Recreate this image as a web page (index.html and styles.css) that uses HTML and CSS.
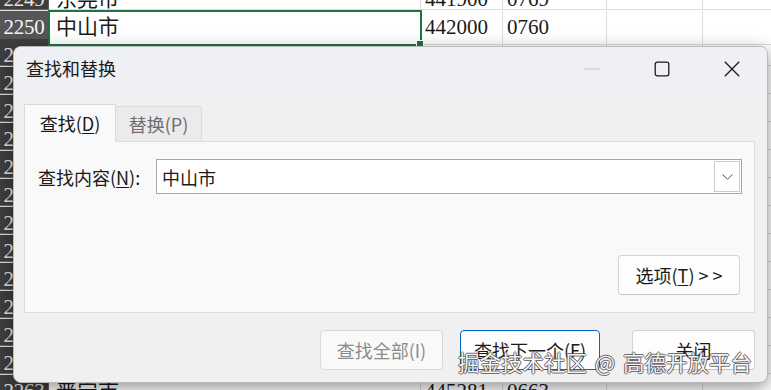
FILE: index.html
```html
<!DOCTYPE html>
<html lang="zh-CN">
<head>
<meta charset="utf-8">
<title>查找和替换</title>
<link rel="stylesheet" href="styles.css">
</head>
<body>
<div class="sheet">
  <div class="row"><div class="rh">2249</div><div class="c">东莞市</div><div class="c">441900</div><div class="c">0769</div><div class="c"></div><div class="c"></div><div class="c"></div></div>
  <div class="row"><div class="rh rh-sel">2250</div><div class="c sel">中山市</div><div class="c">442000</div><div class="c">0760</div><div class="c"></div><div class="c"></div><div class="c"></div></div>
  <div class="row"><div class="rh">2251</div><div class="c">东沙群岛</div><div class="c">442101</div><div class="c"></div><div class="c"></div><div class="c"></div><div class="c"></div></div>
  <div class="row"><div class="rh">2252</div><div class="c">潮州市</div><div class="c">445100</div><div class="c">0768</div><div class="c"></div><div class="c"></div><div class="c"></div></div>
  <div class="row"><div class="rh">2253</div><div class="c">湘桥区</div><div class="c">445102</div><div class="c">0768</div><div class="c"></div><div class="c"></div><div class="c"></div></div>
  <div class="row"><div class="rh">2254</div><div class="c">潮安区</div><div class="c">445103</div><div class="c">0768</div><div class="c"></div><div class="c"></div><div class="c"></div></div>
  <div class="row"><div class="rh">2255</div><div class="c">饶平县</div><div class="c">445122</div><div class="c">0768</div><div class="c"></div><div class="c"></div><div class="c"></div></div>
  <div class="row"><div class="rh">2256</div><div class="c">揭阳市</div><div class="c">445200</div><div class="c">0663</div><div class="c"></div><div class="c"></div><div class="c"></div></div>
  <div class="row"><div class="rh">2257</div><div class="c">榕城区</div><div class="c">445202</div><div class="c">0663</div><div class="c"></div><div class="c"></div><div class="c"></div></div>
  <div class="row"><div class="rh">2258</div><div class="c">揭东区</div><div class="c">445203</div><div class="c">0663</div><div class="c"></div><div class="c"></div><div class="c"></div></div>
  <div class="row"><div class="rh">2259</div><div class="c">揭西县</div><div class="c">445222</div><div class="c">0663</div><div class="c"></div><div class="c"></div><div class="c"></div></div>
  <div class="row"><div class="rh">2260</div><div class="c">惠来县</div><div class="c">445224</div><div class="c">0663</div><div class="c"></div><div class="c"></div><div class="c"></div></div>
  <div class="row"><div class="rh">2261</div><div class="c">揭阳市区</div><div class="c">445201</div><div class="c">0663</div><div class="c"></div><div class="c"></div><div class="c"></div></div>
  <div class="row"><div class="rh">2262</div><div class="c">空港区</div><div class="c">445204</div><div class="c">0663</div><div class="c"></div><div class="c"></div><div class="c"></div></div>
  <div class="row"><div class="rh">2263</div><div class="c">普宁市</div><div class="c">445281</div><div class="c">0663</div><div class="c"></div><div class="c"></div><div class="c"></div></div>
</div>

<div class="dialog">
  <div class="titlebar">
    <div class="title">查找和替换</div>
    <div class="caption">
      <div class="cap-btn">
        <svg width="16" height="16" viewBox="0 0 16 16"><path d="M0.5 8h15" stroke="#c4c4c4" stroke-width="1.1" fill="none"/></svg>
      </div>
      <div class="cap-btn">
        <svg width="16" height="16" viewBox="0 0 16 16"><rect x="1.2" y="1.2" width="13.6" height="13.6" rx="2" stroke="#1b1b1b" stroke-width="1.3" fill="none"/></svg>
      </div>
      <div class="cap-btn">
        <svg width="16" height="16" viewBox="0 0 16 16"><path d="M0.8 0.8L15.2 15.2M15.2 0.8L0.8 15.2" stroke="#1b1b1b" stroke-width="1.3" fill="none"/></svg>
      </div>
    </div>
  </div>
  <div class="body">
    <div class="tabs">
      <div class="tab tab-active">查找(<u>D</u>)</div>
      <div class="tab">替换(P)</div>
    </div>
    <div class="panel">
      <div class="find-row">
        <label class="label">查找内容(<u>N</u>):</label>
        <div class="combo">
          <span class="combo-text">中山市</span>
          <span class="combo-drop">
            <svg width="11" height="6" viewBox="0 0 11 6"><path d="M0.5 0.5L5.5 5.2L10.5 0.5" stroke="#555" stroke-width="1" fill="none"/></svg>
          </span>
        </div>
      </div>
      <div class="opt-row">
        <div class="btn btn-opt">选项(<u>T</u>) &gt; &gt;</div>
      </div>
    </div>
    <div class="actions">
      <div class="btn btn-disabled">查找全部(I)</div>
      <div class="btn btn-default">查找下一个(F)</div>
      <div class="btn btn-close">关闭</div>
    </div>
  </div>
</div>

<div class="watermark">掘金技术社区 @ 高德开放平台</div>
</body>
</html>
```
FILE: styles.css
```css
html, body {
  margin: 0;
  padding: 0;
}
body {
  width: 771px;
  height: 390px;
  overflow: hidden;
  background: #ffffff;
  position: relative;
}

/* spreadsheet */
.sheet {
  margin-top: -17px;
  font-family: "Liberation Serif", "Noto Sans CJK SC", serif;
  font-size: 21px;
  color: #1a1a1a;
}
.row {
  display: grid;
  grid-template-columns: 49px 372px 82px 104px 96px 100px;
  height: 28px;
}
.rh {
  background: #3e3e3e;
  color: #e4e4e4;
  text-align: center;
  line-height: 32px;
  border-bottom: 1px solid #6a6a6a;
  border-right: 1px solid #5c5c5c;
  box-sizing: border-box;
  letter-spacing: -0.3px;
  overflow: hidden;
}
.rh-sel {
  background: #565656;
  color: #f5f5f5;
}
.c {
  box-sizing: border-box;
  border-right: 1px solid #dcdcdc;
  border-bottom: 1px solid #dcdcdc;
  padding-left: 4px;
  line-height: 33px;
  white-space: nowrap;
  overflow: hidden;
}
.c:nth-child(2) {
  padding-left: 7px;
}
.sel {
  position: relative;
  overflow: visible;
  outline: 2px solid #217346;
  outline-offset: -1px;
}
.sel::after {
  content: "";
  position: absolute;
  right: -4px;
  bottom: -4px;
  width: 6px;
  height: 6px;
  background: #217346;
  border: 1px solid #fff;
}

/* dialog */
.dialog {
  position: absolute;
  left: 13px;
  top: 46px;
  width: 755px;
  height: 337px;
  box-sizing: border-box;
  background: #f0f0f0;
  border: 1px solid #b9b9b9;
  border-radius: 8px;
  box-shadow: 0 5px 18px rgba(0, 0, 0, 0.42);
  display: flex;
  flex-direction: column;
  font-family: "Noto Sans CJK SC", sans-serif;
  font-size: 18px;
  color: #1a1a1a;
  overflow: hidden;
}
.titlebar {
  height: 43px;
  display: flex;
  align-items: center;
  background: #eff0f4;
}
.title {
  padding-left: 12px;
  flex: 1;
  line-height: 43px;
}
.caption {
  display: flex;
  height: 43px;
}
.cap-btn {
  width: 70px;
  height: 43px;
  display: flex;
  align-items: center;
  justify-content: center;
}
.body {
  flex: 1;
  display: flex;
  flex-direction: column;
  padding: 14px 12px 12px 10px;
}
.tabs {
  display: flex;
  align-items: flex-end;
  height: 37px;
}
.tab {
  box-sizing: border-box;
  width: 86px;
  height: 35px;
  display: flex;
  align-items: center;
  justify-content: center;
  background: #ebebeb;
  color: #6e6e6e;
  border: 1px solid #dcdcdc;
  border-bottom: none;
  border-left: none;
}
.tab-active {
  width: 92px;
  height: 38px;
  margin-bottom: -1px;
  background: #f9f9f9;
  color: #1a1a1a;
  border: 1px solid #dadada;
  border-bottom: none;
  position: relative;
  z-index: 1;
  padding-bottom: 1px;
}
.panel {
  height: 172px;
  box-sizing: border-box;
  background: #f9f9f9;
  border: 1px solid #dcdcdc;
  padding: 17px 12px 17px 13px;
  display: flex;
  flex-direction: column;
}
.find-row {
  display: flex;
  align-items: center;
  height: 35px;
}
.label {
  width: 118px;
  flex-shrink: 0;
}
.combo {
  flex: 1;
  height: 35px;
  box-sizing: border-box;
  background: #ffffff;
  border: 1px solid #a8a8a8;
  display: flex;
  align-items: center;
}
.combo-text {
  flex: 1;
  padding-left: 5px;
}
.combo-drop {
  width: 26px;
  height: 31px;
  box-sizing: border-box;
  margin-right: 1px;
  border: 1px solid #cdcdcd;
  display: flex;
  align-items: center;
  justify-content: center;
}
.opt-row {
  margin-top: auto;
  display: flex;
  justify-content: flex-end;
  padding-right: 2px;
}
.btn {
  box-sizing: border-box;
  height: 40px;
  width: 123px;
  display: flex;
  align-items: center;
  justify-content: center;
  background: #fdfdfd;
  border: 1px solid #d3d3d3;
  border-bottom-color: #c4c4c4;
  border-radius: 4px;
  color: #1a1a1a;
  white-space: pre;
}
.btn-opt {
  width: 122px;
}
.actions {
  margin-top: 17px;
  display: flex;
  justify-content: flex-end;
}
.btn-disabled {
  color: #8c8c8c;
  background: #f9f9f9;
  border-color: #d9d9d9;
}
.btn-default {
  width: 140px;
  margin-left: 17px;
  border: 1px solid #0067c0;
  box-shadow: inset 0 0 0 1px #ffffff;
}
.btn-close {
  margin-left: 32px;
}
u {
  text-decoration-thickness: 1px;
  text-underline-offset: 2px;
}

/* watermark overlay */
.watermark {
  position: absolute;
  left: 458px;
  top: 350px;
  font-family: "Noto Sans CJK SC", sans-serif;
  font-size: 21.5px;
  line-height: 24px;
  word-spacing: 3px;
  color: rgba(255, 255, 255, 0.95);
  white-space: nowrap;
  text-shadow: 1px 0 0 rgba(70,70,70,.75), -1px 0 0 rgba(70,70,70,.75), 0 1px 0 rgba(70,70,70,.75), 0 -1px 0 rgba(70,70,70,.75);
}
```
